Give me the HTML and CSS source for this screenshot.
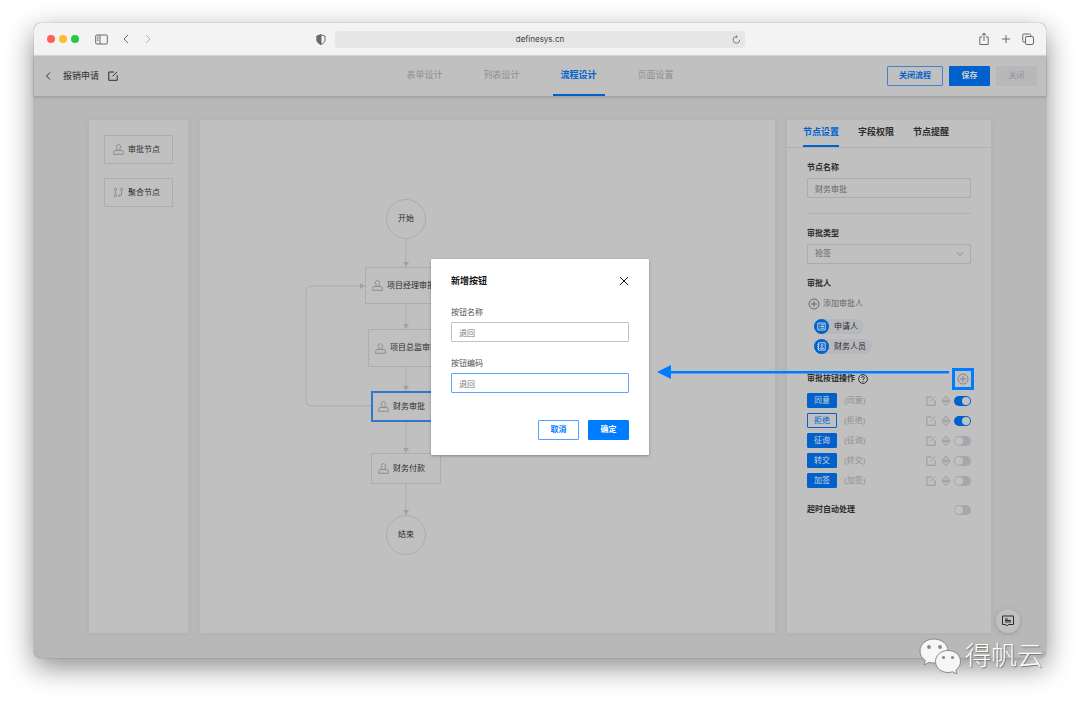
FILE: index.html
```html
<!DOCTYPE html>
<html lang="zh-CN">
<head>
<meta charset="utf-8">
<title>报销申请 - 流程设计</title>
<meta name="viewport" content="width=device-width, initial-scale=1">
<link rel="stylesheet" href="styles.css">
</head>
<body>
<svg class="defs" aria-hidden="true">
  <symbol id="i-stamp" viewBox="0 0 11 11"><path d="M4.300 4.700A2.200 2.200 0 1 1 6.700 4.700L7.300 6.300H8.500Q10.400 6.600 10.400 8.500V10.300H.6V8.500Q.6 6.600 2.500 6.300H3.700zM2.500 6.500h6"/></symbol>
  <symbol id="i-edit" viewBox="0 0 10 10"><path d="M6 1H.8v8.300h8.400V4.200M4.600 5.300 9 .8"/></symbol>
  <symbol id="i-plus" viewBox="0 0 12 12"><circle cx="6" cy="6" r="5"/><path d="M3 6h6M6 3v6"/></symbol>
  <symbol id="i-sort" viewBox="0 0 10 10"><path d="M2.200 2.900 5 .6l2.800 2.300M.8 4.200h8.400M.8 5.800h8.400M2.200 7.100 5 9.400l2.800-2.300"/></symbol>
</svg>

<div class="window">
  <header class="chrome">
    <div class="chrome-left">
      <span class="light red"></span><span class="light yellow"></span><span class="light green"></span>
      <svg class="i-sidebar" viewBox="0 0 13 11" aria-hidden="true"><rect x=".7" y="1" width="11.600" height="9" rx="1"/><path d="M5 1v9M2 3h1.500M2 4.700h1.500M2 6.300h1.500"/></svg>
      <svg class="i-nav" viewBox="0 0 6 10" aria-hidden="true"><path d="M5 1 1 5l4 4"/></svg>
      <svg class="i-nav pale" viewBox="0 0 6 10" aria-hidden="true"><path d="m1 1 4 4-4 4"/></svg>
      <svg class="i-shield" viewBox="0 0 10 11" aria-hidden="true"><path d="M5 .8 9 2v4c0 2-1.600 3.400-4 4.400C2.600 9.400 1 8 1 6V2z"/><path class="fill" d="M5 .8v9.600C2.600 9.400 1 8 1 6V2z"/></svg>
    </div>
    <div class="url"><span>definesys.cn</span>
      <svg viewBox="0 0 9 9" aria-hidden="true"><path d="M7.700 4.800A3.300 3.300 0 1 1 4.400 1.600H5M3.900.3l1.400 1.300L3.900 3"/></svg>
    </div>
    <div class="chrome-right">
      <svg viewBox="0 0 12 14" aria-hidden="true"><path d="M4 5H1.800v7.500h8.400V5H8M6 9V1.200M3.900 3.200 6 1l2.100 2.200"/></svg>
      <svg viewBox="0 0 12 14" aria-hidden="true"><path d="M6 3v8M2 7h8"/></svg>
      <svg viewBox="0 0 12 14" aria-hidden="true"><rect x="3.500" y="4.500" width="8" height="8" rx="1.500"/><path d="M3.500 10H2a1.300 1.300 0 0 1-1.300-1.300V3.300A1.300 1.300 0 0 1 2 2h5.500a1.300 1.300 0 0 1 1.300 1.300v1.200"/></svg>
    </div>
  </header>

  <div class="app">
    <header class="topbar">
      <div class="crumb">
        <button class="plain" aria-label="返回"><svg class="i-back" viewBox="0 0 6 10"><path d="M5 1.500 1.500 5 5 8.500"/></svg></button>
        <h1>报销申请</h1>
        <button class="plain" aria-label="编辑名称"><svg class="i10" viewBox="0 0 10 10"><use href="#i-edit"/></svg></button>
      </div>
      <nav class="tabs">
        <a href="#form">表单设计</a><a href="#list">列表设计</a><a class="on" href="#flow">流程设计</a><a href="#page">页面设置</a>
      </nav>
      <div class="actions">
        <button class="btn outline wide">关闭流程</button>
        <button class="btn solid">保存</button>
        <button class="btn muted">关闭</button>
      </div>
    </header>

    <main class="work">
      <aside class="panel palette">
        <button class="tile"><svg class="i11" viewBox="0 0 11 11"><use href="#i-stamp"/></svg>审批节点</button>
        <button class="tile"><svg class="i11" viewBox="0 0 11 11"><circle cx="2.500" cy="2.300" r="1.200"/><circle cx="8.500" cy="2.300" r="1.200"/><circle cx="2.500" cy="8.700" r="1.200"/><path d="M2.500 3.500v4M8.500 3.500v3.700q0 1.500-1.500 1.500H5.500M6.700 7.500 5.500 8.700l1.200 1.200"/></svg>聚合节点</button>
      </aside>

      <section class="panel canvas" aria-label="流程图">
        <svg class="wires" width="300" height="440" viewBox="0 0 300 440" aria-hidden="true">
          <path class="wire" d="M206 119v26M206 183v24M206 247v22M206 302v28M206 363v30M171 286h-59q-6 0-6-6V172q0-6 6-6h48"/>
          <path class="tip" d="M203 142h6l-3 5zM203 204h6l-3 5zM203 266h6l-3 5zM203 328h6l-3 5zM203 390h6l-3 5zM160 163v6l5-3z"/>
        </svg>
        <div class="node round start">开始</div>
        <div class="node n1"><svg class="i11" viewBox="0 0 11 11"><use href="#i-stamp"/></svg>项目经理审批</div>
        <div class="node n2"><svg class="i11" viewBox="0 0 11 11"><use href="#i-stamp"/></svg>项目总监审批</div>
        <div class="node n3 current"><svg class="i11" viewBox="0 0 11 11"><use href="#i-stamp"/></svg>财务审批</div>
        <div class="node n4"><svg class="i11" viewBox="0 0 11 11"><use href="#i-stamp"/></svg>财务付款</div>
        <div class="node round end">结束</div>
      </section>

      <aside class="panel props">
        <nav class="ptabs"><a class="on" href="#node">节点设置</a><a href="#field">字段权限</a><a href="#remind">节点提醒</a></nav>
        <div class="pbody">
          <label class="lab" for="nodeName">节点名称</label>
          <input class="field" id="nodeName" type="text" value="财务审批">
          <hr>
          <label class="lab" for="kind">审批类型</label>
          <div class="selectbox">
            <select class="field" id="kind"><option>抢签</option></select>
            <svg viewBox="0 0 8 6" aria-hidden="true"><path d="m.8 1 3.200 3.500L7.200 1"/></svg>
          </div>
          <h2 class="lab people">审批人</h2>
          <button class="plain add"><svg class="i12" viewBox="0 0 12 12"><use href="#i-plus"/></svg>添加审批人</button>
          <ul class="chips">
            <li><span class="dot"><svg viewBox="0 0 9 9"><path d="M.8 1h7.400v7H.8zM2 2.800h.6M3.500 2.800H7M2 4.500h.6M3.500 4.500H7M2 6.200h.6M3.500 6.200H7"/></svg></span>申请人</li>
            <li><span class="dot"><svg viewBox="0 0 9 9"><path d="M1.500.8h6.700v7.400H1.500zM.3 2.500h2M.3 4.500h2M.3 6.500h2M3.500 6.800c0-2.400 3-2.400 3 0z"/><circle cx="5" cy="3.200" r="1"/></svg></span>财务人员</li>
          </ul>
          <div class="ophead">
            <h2 class="lab">审批按钮操作</h2>
            <svg class="i10" viewBox="0 0 10 10" aria-hidden="true"><circle cx="5" cy="5" r="4.400"/><path d="M3.600 4c0-1.900 2.800-1.900 2.800-.1C6.400 5 5 4.900 5 6M5 7v.8"/></svg>
            <div class="mark">
              <button class="plain" aria-label="新增按钮"><svg class="i12" viewBox="0 0 12 12"><use href="#i-plus"/></svg></button>
              <svg class="pointer" width="292" height="14" viewBox="0 0 292 14" aria-hidden="true"><path d="M0 7 14 0v14z"/><path d="M13 6h279v2.500H13z"/></svg>
            </div>
          </div>
          <ul class="ops">
            <li><button class="tag">同意</button><span>(同意)</span><svg class="i10" viewBox="0 0 10 10"><use href="#i-edit"/></svg><svg class="i10" viewBox="0 0 10 10"><use href="#i-sort"/></svg><input class="switch" type="checkbox" aria-label="同意" checked></li>
            <li><button class="tag hollow">拒绝</button><span>(拒绝)</span><svg class="i10" viewBox="0 0 10 10"><use href="#i-edit"/></svg><svg class="i10" viewBox="0 0 10 10"><use href="#i-sort"/></svg><input class="switch" type="checkbox" aria-label="拒绝" checked></li>
            <li><button class="tag">征询</button><span>(征询)</span><svg class="i10" viewBox="0 0 10 10"><use href="#i-edit"/></svg><svg class="i10" viewBox="0 0 10 10"><use href="#i-sort"/></svg><input class="switch" type="checkbox" aria-label="征询"></li>
            <li><button class="tag">转交</button><span>(转交)</span><svg class="i10" viewBox="0 0 10 10"><use href="#i-edit"/></svg><svg class="i10" viewBox="0 0 10 10"><use href="#i-sort"/></svg><input class="switch" type="checkbox" aria-label="转交"></li>
            <li><button class="tag">加签</button><span>(加签)</span><svg class="i10" viewBox="0 0 10 10"><use href="#i-edit"/></svg><svg class="i10" viewBox="0 0 10 10"><use href="#i-sort"/></svg><input class="switch" type="checkbox" aria-label="加签"></li>
          </ul>
          <div class="timeout"><label class="lab" for="auto">超时自动处理</label><input class="switch" id="auto" type="checkbox"></div>
        </div>
      </aside>
    </main>

    <button class="chat" aria-label="留言"><svg viewBox="0 0 14 14"><path d="M1.500 2h11v8.500H7.200L5.700 12l-1.200-1.500h-3z"/><path d="M4 5h3M4 6.500h6M4 8h6"/></svg></button>

    <div class="overlay">
      <form class="modal" role="dialog" aria-labelledby="dlg">
        <div class="mhead"><h2 id="dlg">新增按钮</h2><button type="button" class="plain" aria-label="关闭"><svg class="i10" viewBox="0 0 10 10"><path d="m1 1 8 8M9 1 1 9"/></svg></button></div>
        <label for="bname">按钮名称</label>
        <input class="field" id="bname" type="text" value="退回">
        <label for="bcode">按钮编码</label>
        <input class="field focus" id="bcode" type="text" value="退回">
        <div class="mfoot"><button type="button" class="btn outline">取消</button><button type="button" class="btn solid">确定</button></div>
      </form>
    </div>
  </div>
</div>

<div class="brand">
  <svg width="42" height="36" viewBox="0 0 42 36" aria-hidden="true">
    <path d="M15 1C7 1 1 6.300 1 13c0 4 2 7.300 5.300 9.500L5 27l5-2.700c1.600.5 3.300.7 5 .7 8 0 14-5.300 14-12S23 1 15 1z"/>
    <path d="M29 12.500c-7 0-12.500 4.700-12.500 11S22 34.500 29 34.500c1.600 0 3-.2 4.400-.7L38 36l-1.200-4c3-2 4.700-5 4.700-8.500 0-6.300-5.500-11-12.500-11z"/>
    <g class="eye"><circle cx="10" cy="9" r="1.900"/><circle cx="21" cy="9" r="1.900"/><circle cx="24.500" cy="19.500" r="1.600"/><circle cx="33.500" cy="19.500" r="1.600"/></g>
  </svg>
  <span>得帆云</span>
</div>
</body>
</html>
```
FILE: styles.css
```css
:root {
  --blue: #0061cc;
  --bright: #007dff;
  --surface: #c0c0c0;
  --ground: #b8b8b8;
  --line: #acadaf;
  --ink: #2c2d2f;
  --soft: #666768;
}
* { box-sizing: border-box; }
body {
  position: relative;
  display: flex;
  min-height: 100vh;
  margin: 0;
  padding: 23px 34px 46px;
  background: #fff;
  color: var(--ink);
  font: 8px/12px "Liberation Sans", "Noto Sans CJK SC", sans-serif;
}
h1, h2, ul { margin: 0; padding: 0; list-style: none; }
a { color: inherit; text-decoration: none; }
button, input, select { margin: 0; font: inherit; color: inherit; }
svg { display: block; flex: none; fill: none; stroke: currentColor; stroke-width: 1; }
.defs { position: absolute; width: 0; height: 0; }
.i10 { width: 10px; height: 10px; }
.i11 { width: 11px; height: 11px; }
.i12 { width: 12px; height: 12px; }
.plain { display: flex; align-items: center; padding: 0; border: 0; background: none; }

.window {
  flex: 1;
  display: flex;
  flex-direction: column;
  min-width: 0;
  border-radius: 7px;
  background: var(--ground);
  box-shadow: 0 0 1px rgba(0, 0, 0, .5), 0 9px 28px rgba(0, 0, 0, .46);
}

/* browser bar */
.chrome {
  display: grid;
  grid-template-columns: 1fr minmax(0, 410px) 1fr;
  align-items: center;
  height: 33px;
  border-bottom: 1px solid #dcdcdc;
  border-radius: 7px 7px 0 0;
  background: #f3f3f3;
  color: #6a6a6a;
}
.chrome-left { display: flex; align-items: center; padding: 0 9px 0 13px; }
.light { width: 8px; height: 8px; margin-right: 4px; border-radius: 50%; }
.red { background: #ff5f57; }
.yellow { background: #febc2e; }
.green { background: #28c840; }
.i-sidebar { width: 13px; height: 11px; margin: 0 15px 0 12px; }
.i-nav { width: 6px; height: 10px; margin-right: 16px; }
.pale { color: #b5b5b5; }
.i-shield { width: 10px; height: 11px; margin-left: auto; }
.fill { fill: currentColor; }
.url {
  display: flex;
  align-items: center;
  justify-content: center;
  position: relative;
  height: 17px;
  border-radius: 4px;
  background: #e6e6e6;
  color: #3a3a3a;
  font-family: Inter, sans-serif;
}
.url svg { position: absolute; right: 4px; width: 9px; height: 9px; color: #808080; }
.chrome-right { display: flex; justify-content: flex-end; gap: 10px; padding-right: 12px; }
.chrome-right svg { width: 12px; height: 14px; }

/* designer header */
.app { position: relative; flex: 1; display: flex; flex-direction: column; }
.topbar {
  display: grid;
  grid-template-columns: 1fr auto 1fr;
  align-items: center;
  height: 40px;
  background: var(--surface);
  box-shadow: 0 1px 3px rgba(80, 85, 95, .35);
}
.crumb { display: flex; align-items: center; padding-left: 11px; }
.crumb h1 { margin: 0 9px 0 12px; font-size: 9px; font-weight: 400; }
.i-back { width: 6px; height: 10px; }
.tabs { display: flex; gap: 25px; height: 100%; color: #8e8f90; font-size: 9px; }
.tabs a { width: 52px; padding-top: 13px; border-bottom: 2px solid transparent; text-align: center; }
.tabs .on { border-color: var(--blue); color: var(--blue); font-weight: 700; }
.actions { display: flex; justify-content: flex-end; gap: 6px; padding-right: 9px; }
.btn { width: 41px; height: 20px; padding: 0; border: 1px solid; border-radius: 1px; background: none; font-weight: 700; }
.wide { width: 56px; }
.outline { border-color: #3f83d3; color: var(--blue); }
.solid { border-color: var(--blue); background: var(--blue); color: #d0d0d0; }
.muted { border-color: #b7b8ba; background: #b7b8ba; color: #939495; font-weight: 400; }

/* work area */
.work { flex: 1; display: flex; gap: 12px; padding: 24px 55px 25px; }
.panel { background: var(--surface); box-shadow: 0 0 4px rgba(120, 125, 135, .12); }
.palette { display: flex; flex-direction: column; gap: 14px; width: 99px; padding: 15px; }
.tile {
  display: flex;
  align-items: center;
  gap: 4px;
  height: 29px;
  padding: 0 8px;
  border: 1px solid var(--line);
  border-radius: 1px;
  background: none;
}
.tile svg, .node svg { color: #8d8e90; }
.canvas { position: relative; flex: 1; min-width: 0; min-height: 460px; overflow: hidden; }
.wires { position: absolute; left: 0; top: 0; }
.wire { stroke: #a9abb0; }
.tip { fill: #a0a2a8; stroke: none; }
.node {
  position: absolute;
  display: flex;
  align-items: center;
  gap: 4px;
  padding-left: 6px;
  border: 1px solid var(--line);
  background: var(--surface);
  white-space: nowrap;
}
.round { left: 186px; width: 40px; height: 40px; padding: 0; justify-content: center; border-radius: 50%; }
.start { top: 79px; }
.n1 { left: 165px; top: 147px; width: 82px; height: 37px; }
.n2 { left: 168px; top: 209px; width: 76px; height: 38px; }
.n3 { left: 171px; top: 271px; width: 70px; height: 31px; }
.n4 { left: 171px; top: 333px; width: 70px; height: 31px; }
.end { top: 395px; }
.current { padding-left: 5px; border: 2px solid #2c79cc; }

/* properties */
.props { width: 204px; }
.ptabs { display: flex; gap: 19px; height: 28px; padding: 0 16px; border-bottom: 1px solid #b1b2b4; font-size: 9px; font-weight: 700; }
.ptabs a { padding-top: 6px; border-bottom: 2px solid transparent; }
.ptabs .on { border-color: var(--blue); color: var(--blue); }
.pbody { padding: 14px 20px; }
.lab { display: block; font-size: 8px; font-weight: 700; }
.field {
  display: block;
  width: 100%;
  height: 20px;
  margin-top: 4px;
  padding: 0 7px;
  border: 1px solid #aaabad;
  border-radius: 1px;
  background: none;
  color: var(--soft);
  appearance: none;
  outline: 0;
}
hr { margin: 15px 0 14px; border: 0; border-top: 1px solid #b1b2b4; }
.selectbox { position: relative; }
.selectbox svg { position: absolute; right: 7px; top: 7px; width: 8px; height: 6px; color: #8d8e90; }
.people { margin-top: 14px; }
.add { gap: 3px; margin: 8px 0 9px 1px; color: var(--soft); }
.chips { display: flex; flex-direction: column; align-items: flex-start; gap: 5px; margin-left: 7px; }
.chips li { display: flex; align-items: center; gap: 5px; height: 15px; padding-right: 6px; border-radius: 8px; background: #b6b8bb; }
.dot { display: grid; place-items: center; width: 15px; height: 15px; border-radius: 50%; background: var(--blue); color: #c6d2e0; }
.dot svg { width: 9px; height: 9px; }
.ophead { display: flex; align-items: center; gap: 3px; height: 12px; margin: 19px 0 8px; }
.mark {
  position: relative;
  display: grid;
  place-items: center;
  width: 22px;
  height: 22px;
  margin: 0 -3px 0 auto;
  border: 3px solid var(--bright);
  color: #858688;
}
.mark .plain { margin: -2px; }
.pointer { position: absolute; right: 22px; top: -6px; z-index: 2; fill: var(--bright); stroke: none; }
.ops { display: flex; flex-direction: column; gap: 5px; }
.ops li { display: flex; align-items: center; gap: 5px; height: 15px; color: #8f9092; }
.ops span { flex: 1; padding-left: 2px; }
.ops svg { stroke-width: .8; }
.tag { width: 30px; height: 15px; padding: 0; border: 1px solid var(--blue); border-radius: 1px; background: var(--blue); color: #cfd4da; line-height: 12px; }
.hollow { background: none; color: var(--blue); }
.switch { position: relative; width: 17px; height: 10px; border-radius: 5px; background: #a5a7ac; appearance: none; }
.ops .switch { margin-left: -2px; }
.switch::after { content: ""; position: absolute; left: 1px; top: 1px; width: 8px; height: 8px; border-radius: 50%; background: #c2c2c2; }
.switch:checked { background: var(--blue); }
.switch:checked::after { left: 8px; }
.timeout { display: flex; align-items: center; justify-content: space-between; margin-top: 16px; }

.chat {
  position: absolute;
  right: 26px;
  bottom: 25px;
  display: grid;
  place-items: center;
  width: 24px;
  height: 24px;
  padding: 0;
  border: 0;
  border-radius: 50%;
  background: #c0c0c0;
  box-shadow: 0 1px 4px rgba(90, 95, 105, .35);
}
.chat svg { width: 14px; height: 14px; }

/* dialog */
.overlay { position: absolute; inset: 0; display: grid; place-items: center; pointer-events: none; }
.modal {
  display: flex;
  flex-direction: column;
  width: 218px;
  padding: 16px 20px 15px;
  border-radius: 1px;
  background: #fff;
  box-shadow: 0 1px 3px rgba(0, 0, 0, .3);
  color: #505050;
  pointer-events: auto;
}
.mhead { display: flex; align-items: center; justify-content: space-between; margin-bottom: 8px; color: #111; }
.mhead h2 { font-size: 9px; }
.modal label { margin-top: 12px; }
.modal .field { margin-top: 3px; margin-bottom: 4px; border-color: #c4c4c4; color: #777; }
.modal .focus { border-color: #5aa7ff; }
.mfoot { display: flex; justify-content: flex-end; gap: 9px; margin-top: 23px; }
.modal .outline { border-color: #4da2ff; color: var(--bright); }
.modal .solid { border-color: var(--bright); background: var(--bright); color: #fff; }

.brand {
  position: absolute;
  right: 37px;
  bottom: 30px;
  display: flex;
  align-items: center;
  gap: 4px;
  color: #fff;
  font-size: 26px;
  font-weight: 300;
  line-height: 36px;
  text-shadow: 1px 1px 1px #777;
}
.brand svg { fill: #f6f6f6; stroke: #8a8a8a; }
.brand .eye { fill: #888; stroke: none; }
```
